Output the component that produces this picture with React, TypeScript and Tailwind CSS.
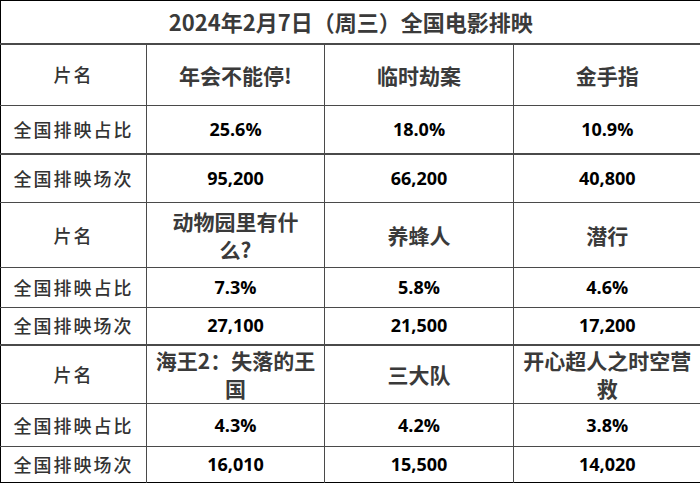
import React from 'react';

type Block = {
  names: React.ReactNode[];
  share: string[];
  shows: string[];
  heights: [string, string, string];
};

const BLOCKS: Block[] = [
  {
    names: ['年会不能停!', '临时劫案', '金手指'],
    share: ['25.6%', '18.0%', '10.9%'],
    shows: ['95,200', '66,200', '40,800'],
    heights: ['h-[62px]', 'h-[48px]', 'h-[49px]'],
  },
  {
    names: [
      <>动物园里有什<br />么?</>,
      '养蜂人',
      '潜行',
    ],
    share: ['7.3%', '5.8%', '4.6%'],
    shows: ['27,100', '21,500', '17,200'],
    heights: ['h-[65px]', 'h-[40px]', 'h-[37px]'],
  },
  {
    names: [
      <>海王2：失落的王<br />国</>,
      '三大队',
      <>开心超人之时空营<br />救</>,
    ],
    share: ['4.3%', '4.2%', '3.8%'],
    shows: ['16,010', '15,500', '14,020'],
    heights: ['h-[59px]', 'h-[43px]', 'h-[36px]'],
  },
];

const cjk = "font-['Noto_Sans_CJK_SC',sans-serif]";
const num = "font-['Open_Sans','Noto_Sans_CJK_SC',sans-serif]";
const line = 'border-[#4a4a4a]';

const Label: React.FC<{ text: string }> = ({ text }) => (
  <td className={`border-r ${line} text-center text-[18px] font-medium tracking-[2px] text-[#333] ${cjk}`}>{text}</td>
);

export default function App() {
  return (
    <div className="w-[700px] h-[483px] bg-white">
      <table className="w-[700px] table-fixed border-collapse border-l border-t border-b border-black">
        <colgroup>
          <col className="w-[146px]" />
          <col className="w-[178px]" />
          <col className="w-[189px]" />
          <col className="w-[187px]" />
        </colgroup>
        <tbody>
          <tr className="h-[43px]">
            <td colSpan={4} className={`text-center text-[22px] font-bold text-[#3a3a3a] ${cjk}`}>
              2024年2月7日（周三）全国电影排映
            </td>
          </tr>
          {BLOCKS.map((b, bi) => (
            <React.Fragment key={bi}>
              <tr className={`${b.heights[0]} ${bi === 1 ? 'border-t' : 'border-t-2'} ${line}`}>
                <Label text="片名" />
                {b.names.map((n, i) => (
                  <td
                    key={i}
                    className={`${i < 2 ? `border-r ${line}` : ''} text-center text-[21px] leading-[28px] font-bold text-[#3a3a3a] ${cjk}`}
                  >
                    {n}
                  </td>
                ))}
              </tr>
              <tr className={`${b.heights[1]} border-t ${line}`}>
                <Label text="全国排映占比" />
                {b.share.map((s, i) => (
                  <td key={i} className={`${i < 2 ? `border-r ${line}` : ''} text-center text-[18px] font-bold text-black ${num}`}>
                    {s}
                  </td>
                ))}
              </tr>
              <tr className={`${b.heights[2]} ${bi === 0 ? 'border-t-2' : 'border-t'} ${line}`}>
                <Label text="全国排映场次" />
                {b.shows.map((s, i) => (
                  <td key={i} className={`${i < 2 ? `border-r ${line}` : ''} text-center text-[18px] font-bold text-black ${num}`}>
                    {s}
                  </td>
                ))}
              </tr>
            </React.Fragment>
          ))}
        </tbody>
      </table>
    </div>
  );
}
